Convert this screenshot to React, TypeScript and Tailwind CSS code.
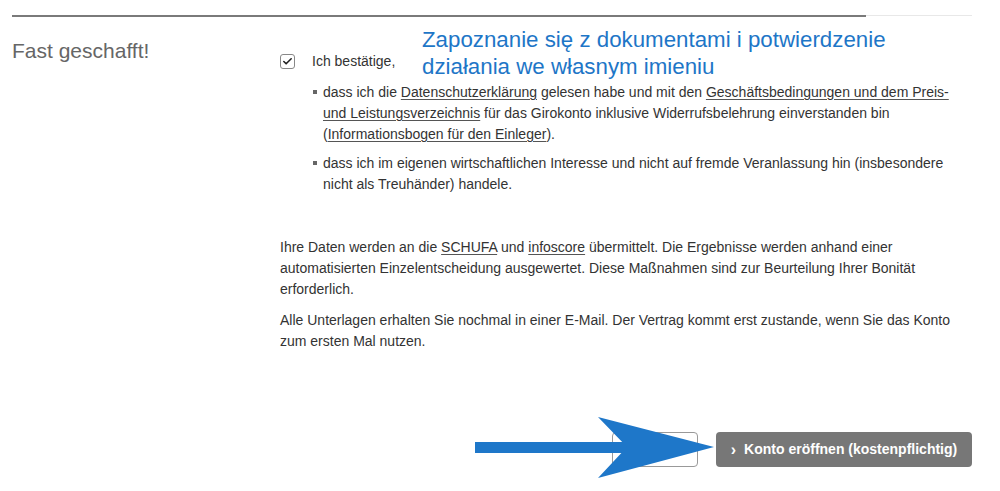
import { Check } from "lucide-react"

function Link({ children }: { children: React.ReactNode }) {
  return <span className="underline underline-offset-2 decoration-[#555]">{children}</span>
}

function Bullet({ children }: { children: React.ReactNode }) {
  return (
    <li className="flex">
      <span className="mt-[8px] mr-[6px] h-[4px] w-[4px] shrink-0 bg-[#666]" />
      <span>{children}</span>
    </li>
  )
}

export default function App() {
  return (
    <div className="relative h-[491px] w-[1000px] overflow-hidden bg-white font-['Liberation_Sans',Arial,sans-serif] text-[14px] leading-[21px] text-[#333]">
      {/* progress */}
      <div className="flex items-start pl-[12px] pt-[15px]">
        <div className="h-[2px] w-[854px] bg-[#7a7a7a]" />
        <div className="h-px w-[106px] bg-[#e8e8e8]" />
      </div>

      <div className="mt-[20px] flex items-start pl-[12px]">
        <h1 className="w-[268px] text-[21px] leading-[28px] text-[#666]">Fast geschafft!</h1>

        <div className="w-[692px] pt-[14px]">
          <label className="flex items-center">
            <span className="mr-[17px] flex h-[15px] w-[15px] items-center justify-center rounded-[3px] border border-[#888]">
              <Check className="h-[11px] w-[11px] text-[#222]" strokeWidth={3.5} />
            </span>
            <span>Ich bestätige,</span>
          </label>

          <ul className="ml-[33px] mt-[10px] flex w-[655px] flex-col gap-[8px]">
            <Bullet>
              dass ich die <Link>Datenschutzerklärung</Link> gelesen habe und mit den{" "}
              <Link>Geschäftsbedingungen und dem Preis- und Leistungsverzeichnis</Link> für das Girokonto inklusive
              Widerrufsbelehrung einverstanden bin (<Link>Informationsbogen für den Einleger</Link>).
            </Bullet>
            <Bullet>
              dass ich im eigenen wirtschaftlichen Interesse und nicht auf fremde Veranlassung hin (insbesondere nicht
              als Treuhänder) handele.
            </Bullet>
          </ul>

          <p className="mt-[42px] w-[686px]">
            Ihre Daten werden an die <Link>SCHUFA</Link> und <Link>infoscore</Link> übermittelt. Die Ergebnisse werden
            anhand einer automatisierten Einzelentscheidung ausgewertet. Diese Maßnahmen sind zur Beurteilung Ihrer
            Bonität erforderlich.
          </p>
          <p className="mt-[10px] w-[686px]">
            Alle Unterlagen erhalten Sie nochmal in einer E-Mail. Der Vertrag kommt erst zustande, wenn Sie das Konto
            zum ersten Mal nutzen.
          </p>

          <div className="mt-[80px] flex justify-end gap-[18px]">
            <button className="h-[35px] w-[86px] rounded-[4px] border border-[#999] bg-white" />
            <button className="flex h-[35px] w-[256px] items-center justify-center gap-[8px] rounded-[4px] bg-[#777] font-bold text-white">
              <span className="text-[16px]">›</span>
              <span>Konto eröffnen (kostenpflichtig)</span>
            </button>
          </div>
        </div>
      </div>

      {/* annotation */}
      <div className="absolute left-[422px] top-[26px] font-['Liberation_Sans',Arial,sans-serif] text-[22.3px] leading-[27px] text-[#1e76c7]">
        Zapoznanie się z dokumentami i potwierdzenie
        <br />
        działania we własnym imieniu
      </div>
      <svg className="pointer-events-none absolute left-[475px] top-[416px]" width="240" height="63" viewBox="0 0 240 63">
        <rect x="0" y="26" width="157" height="11" fill="#1e77c9" />
        <polygon points="123,1 239,31 123,62 152,31" fill="#1e77c9" />
      </svg>
    </div>
  )
}
